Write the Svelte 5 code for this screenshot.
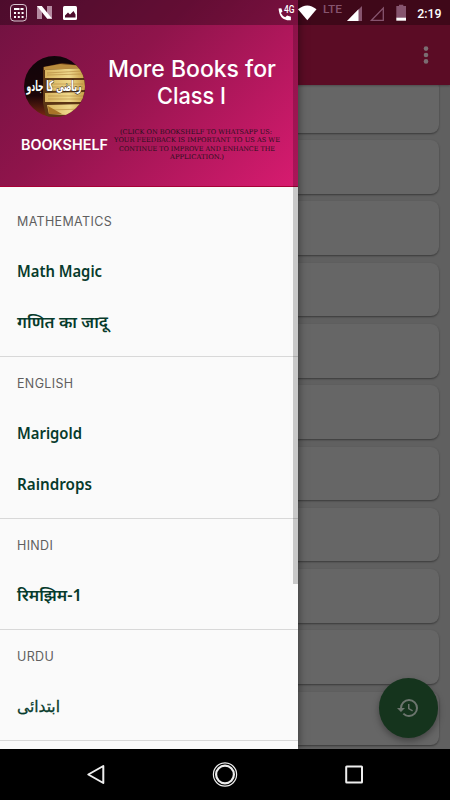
<script>
  const cards = Array.from({ length: 11 }, (_, i) => i);

  const sections = [
    {
      title: 'MATHEMATICS',
      books: [
        { name: 'Math Magic', width: 85 },
        { name: 'गणित का जादू', width: 91 }
      ]
    },
    {
      title: 'ENGLISH',
      books: [
        { name: 'Marigold', width: 65 },
        { name: 'Raindrops', width: 75 }
      ]
    },
    { title: 'HINDI', books: [{ name: 'रिमझिम-1', width: 65 }] },
    { title: 'URDU', books: [{ name: 'ابتدائی', width: 43, urdu: true }] }
  ];
</script>

<div class="phone">
  <div class="page">
    <div class="toolbar">
      <svg width="6" height="20" viewBox="0 0 6 20">
        <circle cx="3" cy="3.6" r="2.3" />
        <circle cx="3" cy="10" r="2.3" />
        <circle cx="3" cy="16.4" r="2.3" />
      </svg>
    </div>
    <div class="cards">
      {#each cards as card (card)}
        <div class="card"></div>
      {/each}
    </div>
  </div>

  <button class="fab" aria-label="History">
    <svg width="24" height="24" viewBox="0 0 24 24">
      <path d="M13 3a9 9 0 0 0-9 9H1l3.9 3.9.1.1L9 12H6a7 7 0 1 1 7 7c-1.93 0-3.68-.79-4.94-2.06l-1.42 1.42A8.95 8.95 0 0 0 13 21a9 9 0 0 0 0-18zm-1 5v5l4.28 2.54.72-1.21-3.5-2.08V8H12z" />
    </svg>
  </button>

  <div class="drawer">
    <div class="header">
      <div class="left">
        <svg class="avatar" width="61" height="61" viewBox="0 0 61 61">
          <defs>
            <clipPath id="round"><circle cx="30.5" cy="30.5" r="30.5" /></clipPath>
            <linearGradient id="night" x1="0" y1="0" x2="0" y2="1">
              <stop offset="0" stop-color="#10050a" />
              <stop offset=".65" stop-color="#1c0508" />
              <stop offset="1" stop-color="#7a2a12" />
            </linearGradient>
            <linearGradient id="paper" x1="0" y1="0" x2="1" y2="0">
              <stop offset="0" stop-color="#d9b45f" />
              <stop offset=".6" stop-color="#efd98c" />
              <stop offset="1" stop-color="#c79d45" />
            </linearGradient>
          </defs>
          <g clip-path="url(#round)">
            <rect width="61" height="61" fill="url(#night)" />
            <path d="M19 11L38 7L61 10V61H22L19 47Z" fill="#5b3514" />
            <path d="M20 11L36 8L61 10V12L20 14Z" fill="#b98c3e" />
            <path d="M21 14L61 12V22L21 22Z" fill="url(#paper)" />
            <path d="M23 24L61 24V34L23 35Z" fill="url(#paper)" />
            <path d="M21 37L61 36V46L21 46Z" fill="url(#paper)" />
            <path d="M23 49L61 48V60L25 58Z" fill="url(#paper)" />
            <path d="M23 17L58 15M23 19L58 18M25 28H59M25 31H59M24 40H59M24 43H59M25 54L59 53" stroke="#a97b35" stroke-width=".5" />
            <path d="M24 50Q31 54 38 58H25Z" fill="#a87428" />
          </g>
          <text x="30" y="35" text-anchor="middle" textLength="55" lengthAdjust="spacingAndGlyphs">ریاضی کا جادو</text>
        </svg>
        <div class="shelf">
          <svg width="88" height="20"><text x="0" y="14.5" textLength="87" lengthAdjust="spacingAndGlyphs">BOOKSHELF</text></svg>
        </div>
      </div>
      <div class="right">
        <svg class="title" width="170" height="56">
          <text x="0" y="21.5" textLength="168" lengthAdjust="spacingAndGlyphs">More Books for</text>
          <text x="49" y="48.5" textLength="69" lengthAdjust="spacingAndGlyphs">Class I</text>
        </svg>
        <svg class="note" width="168" height="36">
          <text x="7" y="8" textLength="152" lengthAdjust="spacingAndGlyphs">(CLICK ON BOOKSHELF TO WHATSAPP US:</text>
          <text x="1" y="16.3" textLength="166" lengthAdjust="spacingAndGlyphs">YOUR FEEDBACK IS IMPORTANT TO US AS WE</text>
          <text x="6" y="24.6" textLength="156" lengthAdjust="spacingAndGlyphs">CONTINUE TO IMPROVE AND ENHANCE THE</text>
          <text x="57" y="32.9" textLength="54" lengthAdjust="spacingAndGlyphs">APPLICATION.)</text>
        </svg>
      </div>
    </div>
    <div class="menu">
      {#each sections as section (section.title)}
        <div class="section">
          <div class="row label">{section.title}</div>
          {#each section.books as book (book.name)}
            <div class="row">
              <svg class="book" class:urdu={book.urdu} width="120" height="34">
                <text x="0" y="22.4" textLength={book.width} lengthAdjust="spacingAndGlyphs">{book.name}</text>
              </svg>
            </div>
          {/each}
        </div>
      {/each}
    </div>
  </div>

  <div class="scrollbar"></div>

  <div class="status">
    <svg width="450" height="25" viewBox="0 0 450 25">
      <!-- notifications -->
      <rect x="10.5" y="4.5" width="16" height="16.5" rx="3.5" fill="none" stroke="#d9c6d0" />
      <path d="M14 9h5.500M14 13h2M17.800 13h2M14 17h2M17.800 17h2M21.600 17h2M21.600 13h2M20.500 9h3" stroke="#fff" stroke-width="1.8" />
      <path d="M37 6h5v13h-5zM47 6h5v13h-5z" fill="#b58ba1" />
      <path d="M37 6h4.800L52 18.500H47z" fill="#fff" />
      <rect x="63" y="6" width="14" height="14" rx="1.5" fill="#fff" />
      <path d="M65 17.500v-2l3-3 2 2 3.500-3.500 2 3.500v3z" fill="#4d0c2c" />
      <!-- call, wifi and signal -->
      <path d="M278.600 8.500l2.700-.3 1.200 3.200-1.600 1.700q1.400 3 4.300 4.200l1.900-1.700 3.800 1.100v3.600q-11.500.8-12.300-11.800z" fill="#fff" />
      <text class="g4" x="284" y="13" textLength="10.5" lengthAdjust="spacingAndGlyphs">4G</text>
      <path d="M298 9.300q9.200-7.800 18.500 0L307.300 20.300z" fill="#fff" />
      <text class="lte" x="323" y="13.3" textLength="19" lengthAdjust="spacingAndGlyphs">LTE</text>
      <path d="M347 21L362 6v15z" fill="#86546e" />
      <path d="M347 21L358.500 9.300V21z" fill="#fff" />
      <path d="M371.500 20.300L383.300 8v12.300z" fill="none" stroke="#86546e" stroke-width="1.3" />
      <path d="M396.300 6h2.700V4.800h4.300V6h2.700v12h-9.700z" fill="#86546e" />
      <path d="M396.300 17.700h9.700v3h-9.700z" fill="#fff" />
      <text class="time" x="417.3" y="17.6" textLength="24.3" lengthAdjust="spacingAndGlyphs">2:19</text>
    </svg>
  </div>

  <div class="nav">
    <svg width="450" height="51" viewBox="0 0 450 51" fill="none" stroke="#eee">
      <path d="M103.300 17v17L88.300 25.500z" stroke-width="2" stroke-linejoin="round" />
      <circle cx="225" cy="25.5" r="11.6" stroke-width="1.2" />
      <circle cx="225" cy="25.5" r="8.9" stroke-width="2.2" />
      <rect x="346.2" y="17.5" width="15.8" height="16" rx=".5" stroke-width="2" />
    </svg>
  </div>
</div>

<style>
  :global(body) {
    margin: 0;
    background: #000;
  }

  .phone {
    display: grid;
    grid-template: 749px 51px / 450px;
    width: 450px;
    height: 800px;
    overflow: hidden;
    font-family: 'Open Sans', 'Noto Sans', sans-serif;
  }

  .page,
  .drawer,
  .fab,
  .status,
  .scrollbar {
    grid-area: 1 / 1;
  }

  svg {
    display: block;
    overflow: visible;
  }

  .page {
    display: flex;
    flex-direction: column;
    min-height: 0;
    background: #606060;
    overflow: hidden;
  }

  .toolbar {
    z-index: 1;
    box-sizing: border-box;
    display: flex;
    flex: 0 0 85px;
    justify-content: flex-end;
    align-items: center;
    padding: 25px 21px 0 0;
    background: #5b0c25;
    box-shadow: 0 1px 2px rgba(0, 0, 0, 0.25);
  }

  .toolbar circle {
    fill: #7b6d72;
  }

  .cards {
    display: flex;
    flex-direction: column;
    gap: 7.6px;
    padding-right: 11px;
    margin-top: -6.2px;
  }

  .card {
    flex: 0 0 53.7px;
    background: #666;
    border-radius: 0 8px 8px 0;
    box-shadow: 0 1px 2px rgba(0, 0, 0, 0.4);
  }

  .fab {
    display: flex;
    place-self: end;
    justify-content: center;
    align-items: center;
    width: 59.5px;
    height: 59.5px;
    margin: 0 12px 11.5px 0;
    padding: 0;
    border: none;
    border-radius: 50%;
    background: #15341d;
    box-shadow: 0 3px 7px rgba(0, 0, 0, 0.35);
  }

  .fab path {
    fill: #6c756e;
  }

  .drawer {
    width: 297.7px;
    background: #fafafa;
    box-shadow: 0 0 9px rgba(0, 0, 0, 0.5);
    overflow: hidden;
    z-index: 1;
  }

  .header {
    box-sizing: border-box;
    display: flex;
    height: 187px;
    padding-top: 55px;
    border-bottom: 1px solid #a80036;
    background: linear-gradient(135deg, #6f1240 0%, #8f144b 40%, #d81b70 100%);
  }

  .left {
    flex: 0 0 107px;
  }

  .avatar {
    margin: 0.5px 0 0 24px;
  }

  .avatar text {
    font: bold 14px 'DejaVu Sans', sans-serif;
    fill: #fff;
    stroke: #222;
    stroke-width: 1px;
    paint-order: stroke;
  }

  .shelf {
    padding: 18px 0 0 21px;
  }

  .shelf text {
    font: 600 14.5px Inter, sans-serif;
    fill: #fff;
  }

  .title {
    margin-left: -1px;
  }

  .title text {
    font: 500 22.5px Inter, sans-serif;
    fill: #fff;
  }

  .note {
    margin: 15px 0 0 4px;
  }

  .note text {
    font: 6.6px 'DejaVu Serif', serif;
    fill: #28101c;
  }

  .menu {
    padding-top: 8px;
  }

  .section {
    padding-bottom: 8px;
    border-bottom: 1px solid #d8d8d8;
  }

  .row {
    display: flex;
    align-items: center;
    height: 51px;
    padding-left: 17px;
  }

  .label {
    box-sizing: border-box;
    padding-top: 1px;
    font: 400 12.5px Inter, sans-serif;
    letter-spacing: 0.35px;
    color: #5f5f5f;
  }

  .book text {
    font: 600 16px 'Noto Sans', 'Open Sans', sans-serif;
    fill: #073b2c;
  }

  .urdu text {
    font: 400 16px 'DejaVu Sans', sans-serif;
    stroke: #073b2c;
    stroke-width: 0.3px;
  }

  .scrollbar {
    width: 4.7px;
    height: 559px;
    margin: 25px 0 0 293px;
    background: rgba(0, 0, 0, 0.2);
    z-index: 2;
  }

  .status {
    height: 25px;
    background: rgba(0, 0, 0, 0.3);
    z-index: 3;
  }

  .g4 {
    font: 500 10px Roboto, sans-serif;
    fill: #fff;
  }

  .lte {
    font: 500 11.5px Roboto, sans-serif;
    fill: #86546e;
  }

  .time {
    font: 500 13px Roboto, sans-serif;
    fill: #fff;
  }

  .nav {
    background: #000;
    z-index: 2;
  }
</style>
